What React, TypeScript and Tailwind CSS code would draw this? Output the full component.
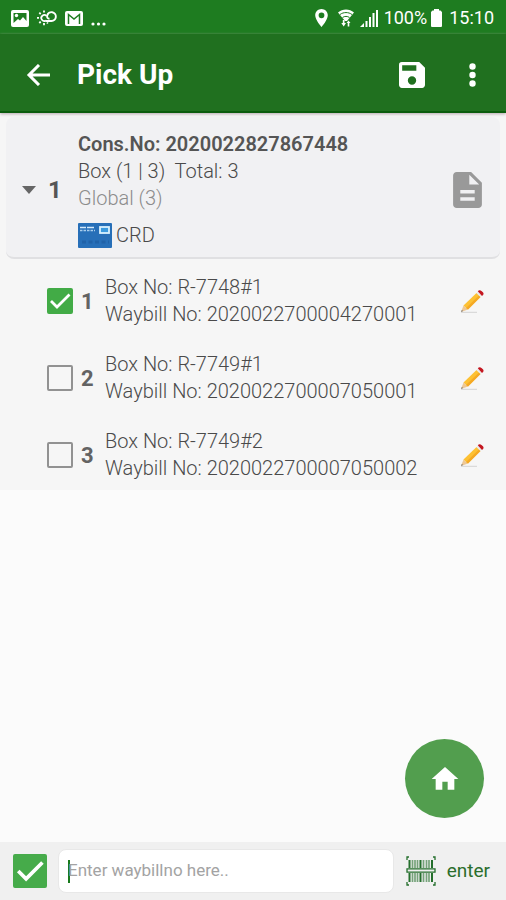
import * as React from "react";

type Box = {
  id: number;
  boxNo: string;
  waybillNo: string;
  picked: boolean;
};

const initialBoxes: Box[] = [
  { id: 1, boxNo: "R-7748#1", waybillNo: "2020022700004270001", picked: true },
  { id: 2, boxNo: "R-7749#1", waybillNo: "2020022700007050001", picked: false },
  { id: 3, boxNo: "R-7749#2", waybillNo: "2020022700007050002", picked: false },
];

export default function App() {
  const [boxes, setBoxes] = React.useState(initialBoxes);
  const [expanded, setExpanded] = React.useState(true);

  const toggleBox = (id: number) =>
    setBoxes((list) =>
      list.map((b) => (b.id === id ? { ...b, picked: !b.picked } : b)),
    );

  return (
    <div className="flex min-h-screen flex-col bg-[#fbfbfb] font-['Roboto',sans-serif] text-[#4a4a4a]">
      <StatusBar />
      <AppBar />

      <main className="flex-1">
        <section className="bg-[#f6f6f6] pt-1 pb-2">
          <div className="mx-1.5 flex items-center rounded-lg border-b-2 border-[#e0e0e2] bg-[#f1f1f3] pt-3.5 pr-[18px] pb-2 pl-4">
            <button
              type="button"
              aria-label="Toggle boxes"
              aria-expanded={expanded}
              onClick={() => setExpanded((e) => !e)}
              className="flex w-14 shrink-0 items-center gap-3 text-2xl font-bold text-[#555555]"
            >
              <svg viewBox="0 0 14 8" className="h-2 w-3.5" fill="#666666">
                <path d="M0 0h14L7 8z" />
              </svg>
              1
            </button>
            <div className="min-w-0 flex-1 text-xl leading-[27px] font-light">
              <p className="font-semibold text-[#555555]">Cons.No: 2020022827867448</p>
              <p className="whitespace-pre">Box (1 | 3){"  "}Total: 3</p>
              <p className="text-[#8c8c8c]">Global (3)</p>
              <p className="mt-2.5 flex items-center gap-1">
                <CardIcon />
                CRD
              </p>
            </div>
            <button type="button" aria-label="Document" className="shrink-0">
              <svg viewBox="4 2 16 20" className="h-9 w-[29px]" fill="#999999">
                <path d="M14 2H6c-1.1 0-2 .9-2 2v16c0 1.1.9 2 2 2h12c1.1 0 2-.9 2-2V8l-6-6zm2 16H8v-2h8v2zm0-4H8v-2h8v2zm-3-5V3.5L18.500 9H13z" />
              </svg>
            </button>
          </div>

          {expanded && (
            <ul className="flex flex-col gap-[23px] pt-[15px]">
              {boxes.map((box) => (
                <BoxRow key={box.id} box={box} onToggle={() => toggleBox(box.id)} />
              ))}
            </ul>
          )}
        </section>
      </main>

      <div className="flex justify-end px-[22px] pb-6">
        <button
          type="button"
          aria-label="Home"
          className="flex size-[79px] items-center justify-center rounded-full bg-[#529e4e]"
        >
          <svg viewBox="0 0 24 24" className="size-8" fill="#ffffff">
            <path d="M10 20v-6h4v6h5v-8h3L12 3 2 12h3v8z" />
          </svg>
        </button>
      </div>

      <EntryBar />
    </div>
  );
}

function StatusBar() {
  return (
    <div className="flex h-[34px] shrink-0 items-center justify-between bg-[#1e7c20] pt-0.5 pr-3 pl-[11px] text-white">
      <div className="flex items-center gap-2">
        <svg viewBox="0 0 18 17" className="h-[17px] w-[18px]">
          <rect width="18" height="17" rx="2" fill="#ffffff" />
          <path d="M2.500 13V3h13v8l-3.500-4-3 3.500-2-1.500z" fill="#1e7c20" />
          <circle cx="5.500" cy="5.500" r="1.700" fill="#ffffff" />
        </svg>
        <svg viewBox="0 0 20 16" className="h-4 w-5" fill="none" stroke="#ffffff">
          <path d="M9.500 6a3 3 0 1 0-.5 4.500" strokeWidth="1.700" />
          <path d="M9 11h5.500a4.400 4.400 0 1 0-4.300-5.500c-.4 1.700.3 3.200 2.300 3.200" strokeWidth="1.900" />
          <path d="M7 .5v2M2.300 2.700l1.400 1.400M0 7.800h2M2.300 13l1.400-1.400M7 13v2.200M10.800 13.500l-.7-1" strokeWidth="1.800" />
        </svg>
        <svg viewBox="0 0 18 15" className="h-[15px] w-[18px]">
          <rect width="18" height="15" rx="2" fill="#ffffff" />
          <path d="M3.500 13V3.500L9 8l5.500-4.500V13" fill="none" stroke="#1e7c20" strokeWidth="1.500" />
        </svg>
        <svg viewBox="0 0 16 16" className="size-4" fill="#ffffff">
          <circle cx="2" cy="14" r="1.600" />
          <circle cx="7.500" cy="14" r="1.600" />
          <circle cx="13" cy="14" r="1.600" />
        </svg>
      </div>

      <div className="flex items-center">
        <svg viewBox="5 2 14 20" className="mr-2.5 h-[18px] w-[13px]" fill="#ffffff" fillRule="evenodd">
          <path d="M12 2C8.100 2 5 5.100 5 9c0 5.300 7 13 7 13s7-7.700 7-13c0-3.900-3.100-7-7-7zm0 10.200a3.200 3.200 0 1 1 0-6.400 3.200 3.200 0 0 1 0 6.400z" />
        </svg>
        <svg viewBox="0 0 16 18" className="mr-1.5 h-[18px] w-4">
          <path d="M0 3.500C4.500-.5 11.500-.5 16 3.500L9 12H7z" fill="#ffffff" />
          <path d="M2 5.500c3.600-2.600 8.400-2.600 12 0M4.500 8.500c2.200-1.500 4.800-1.500 7 0" fill="none" stroke="#1e7c20" strokeWidth="1" />
          <path d="M4.800 11h1.700v3H8l-2.300 3.500L3.300 14h1.500zM9.700 17.500V14H8.500l2-2.500 2 2.500h-1.200v3.500z" fill="#ffffff" />
        </svg>
        <svg viewBox="0 0 18 18" className="mr-1.5 h-[18px] w-[18px]" fill="#ffffff">
          <path d="M0 18l4-4v4zM5.500 12h2v6h-2zM9 8h2v10H9zM12.500 4h2v14h-2zM16 1h2v17h-2z" />
        </svg>
        <span className="text-lg">100%</span>
        <svg viewBox="0 0 11 18" className="mr-[7px] ml-1 h-[18px] w-[11px]" fill="#ffffff">
          <path d="M3 0h5v1.500h1.500L11 3v14q0 1-1 1H1q-1 0-1-1V3l1.500-1.500H3z" />
        </svg>
        <span className="text-lg">15:10</span>
      </div>
    </div>
  );
}

function AppBar() {
  return (
    <header className="relative flex h-[79px] shrink-0 items-center border-b-2 border-[#0b5c0d] bg-[#20701f] pt-1 pr-4 pl-[26px] text-white shadow-[0_1px_3px_#b5a5ad]">
      <button type="button" aria-label="Back">
        <svg viewBox="0 0 24 22" className="h-[22px] w-6" fill="none" stroke="#ffffff" strokeWidth="3">
          <path d="M13 1L3 11l10 10M2.500 11H24" />
        </svg>
      </button>
      <h1 className="ml-[27px] flex-1 text-[28px] font-bold">Pick Up</h1>
      <button type="button" aria-label="Save" className="mr-11">
        <svg viewBox="3 3 18 18" className="size-[26px]" fill="#ffffff" fillRule="evenodd">
          <path d="M17 3H5a2 2 0 0 0-2 2v14c0 1.100.9 2 2 2h14c1.100 0 2-.9 2-2V7l-4-4zm-5 15.700a2.900 2.900 0 1 1 0-5.800 2.900 2.900 0 0 1 0 5.800zM15 9H5.200V5.300H15z" />
        </svg>
      </button>
      <button type="button" aria-label="More options" className="mr-3.5">
        <svg viewBox="0 0 7 24" className="h-6 w-[7px]" fill="#ffffff">
          <circle cx="3.500" cy="3.500" r="3.200" />
          <circle cx="3.500" cy="12" r="3.200" />
          <circle cx="3.500" cy="20.500" r="3.200" />
        </svg>
      </button>
    </header>
  );
}

function BoxRow({ box, onToggle }: { box: Box; onToggle: () => void }) {
  const inputId = `box-${box.id}`;

  return (
    <li className="flex items-center pr-[22px] pl-[47px]">
      <span className="relative flex size-[26px] shrink-0">
        <input
          id={inputId}
          type="checkbox"
          checked={box.picked}
          onChange={onToggle}
          className="peer size-full appearance-none rounded-xs border-2 border-[#929292] checked:border-[#42ab46] checked:bg-[#42ab46]"
        />
        <CheckMark />
      </span>
      <label htmlFor={inputId} className="flex min-w-0 flex-1 items-center">
        <span className="w-8 shrink-0 pl-2 text-[22px] font-bold text-[#636363]">{box.id}</span>
        <span className="text-xl leading-[27px] font-light">
          <span className="block">Box No: {box.boxNo}</span>
          <span className="block">Waybill No: {box.waybillNo}</span>
        </span>
      </label>
      <button type="button" aria-label={`Edit box ${box.id}`} className="shrink-0">
        <PencilIcon />
      </button>
    </li>
  );
}

function CheckMark() {
  return (
    <svg
      viewBox="0 0 26 26"
      className="pointer-events-none absolute inset-0 hidden size-full peer-checked:block"
      fill="none"
      stroke="#ffffff"
      strokeWidth="2.800"
    >
      <path d="M4 13l6 6L22.500 6.500" />
    </svg>
  );
}

function PencilIcon() {
  return (
    <svg viewBox="0 0 24 24" className="size-6">
      <path d="M1 23.300h16" stroke="#d4d4d4" />
      <path d="M1 23l2.500-6.500L8 20.500z" fill="#edc795" />
      <path d="M1 23l.8-2L3.200 22z" fill="#777777" />
      <path d="M3.500 16.500L16.500 4l4 4L8 20.500z" fill="#fdc133" />
      <path d="M6 19L19 6.500 20.500 8 8 20.500z" fill="#f5a925" />
      <path d="M16.500 4l1.500-1.500 4 4L20.500 8z" fill="#e9e9e9" />
      <path d="M17.800 2.300q1.700-2 4 0 3 2.300 1 4l-.8.600z" fill="#c41720" />
    </svg>
  );
}

function CardIcon() {
  return (
    <svg viewBox="0 0 34 25" className="h-[25px] w-[34px]">
      <rect width="34" height="25" rx="1" fill="#276fb8" />
      <path d="M2 4.500h6M9 4.500h7" stroke="#d4eafa" strokeWidth="1.500" />
      <path d="M2 7.500h15" stroke="#a8cdec" strokeWidth="1.300" strokeDasharray="2.500 1" />
      <rect x="22" y="4" width="9" height="6" fill="#3b9ade" stroke="#d9f1ff" strokeWidth="1.800" />
      <path d="M4 19h27" stroke="#2062a8" strokeWidth="3" strokeDasharray="4 2.500" />
    </svg>
  );
}

function EntryBar() {
  return (
    <form
      className="flex shrink-0 items-center bg-[#f0f0f0] py-[7px] pr-4 pl-[13px]"
      onSubmit={(e) => e.preventDefault()}
    >
      <span className="relative flex size-[34px] shrink-0">
        <input
          type="checkbox"
          defaultChecked
          aria-label="Select all"
          className="peer size-full appearance-none rounded-xs border-2 border-[#929292] checked:border-[#46ab4a] checked:bg-[#46ab4a]"
        />
        <CheckMark />
      </span>
      <div className="mr-3 ml-[11px] flex h-11 min-w-0 flex-1 items-center rounded-lg border border-[#e8e8e8] bg-white pr-2 pl-[9px]">
        <span className="h-[23px] w-0.5 shrink-0 bg-[#187a1c]" />
        <input
          type="text"
          aria-label="Waybill number"
          placeholder="Enter waybillno here.."
          className="-ml-0.5 min-w-0 flex-1 text-[17px] outline-none placeholder:text-[#a3a3a3]"
        />
      </div>
      <button type="button" aria-label="Scan barcode" className="mr-[11px] shrink-0">
        <svg viewBox="0 0 30 30" className="size-[30px]" fill="none" stroke="#246f2c">
          <path d="M1 4V1h2M27 1h2v3M1 26v3h2M27 29h2v-3" strokeWidth="1.300" />
          <path d="M3.500 4v8M3.500 17v9M14.500 4v8M14.500 17v9M26 4v8M26 17v9" strokeWidth="2" />
          <path d="M6.500 4v8M6.500 17v9M9 4v8M9 17v9M11.500 4v8M11.500 17v9M17.500 4v8M17.500 17v9M20.500 4v8M20.500 17v9M23 4v8M23 17v9" strokeWidth="1.700" opacity="0.600" />
          <path d="M1 12.800h28v3.400H1z" fill="#f0f0f0" strokeWidth="1.300" />
        </svg>
      </button>
      <button type="submit" className="shrink-0 text-[19px] text-[#2b6e2c]">
        enter
      </button>
    </form>
  );
}
